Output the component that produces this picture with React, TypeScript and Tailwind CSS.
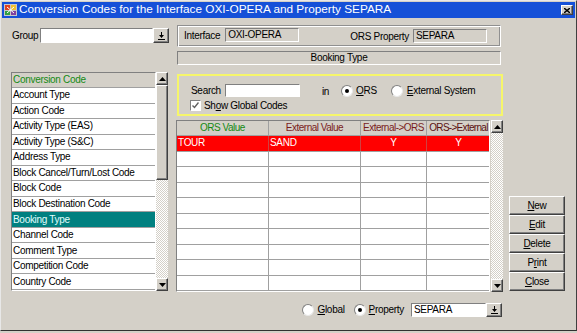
import React from "react";

const raised =
  "border border-t-white border-l-white border-b-[#404040] border-r-[#404040] shadow-[inset_-1px_-1px_0_#808080] bg-[#d4d0c8]";
const sunken =
  "border border-t-[#808080] border-l-[#808080] border-b-white border-r-white";
const track =
  "bg-[repeating-conic-gradient(#ffffff_0_25%,#d4d0c8_0_50%)] bg-[length:2px_2px]";

function DropBtn() {
  return (
    <div className={`${raised} w-[16px] h-full flex items-center justify-center`}>
      <svg width="7" height="8" viewBox="0 0 7 8">
        <path d="M3 0h1v3h2l-2.5 3L1 3h2z" fill="#000" />
        <rect x="0" y="7" width="7" height="1" fill="#000" />
      </svg>
    </div>
  );
}

function ScrollBtn({ up }: { up?: boolean }) {
  return (
    <div className={`${raised} w-[12px] h-[13px] flex items-center justify-center shrink-0`}>
      <svg width="7" height="4" viewBox="0 0 7 4">
        <path d={up ? "M3.5 0L7 4H0z" : "M0 0h7L3.5 4z"} fill="#000" />
      </svg>
    </div>
  );
}

function Radio({ checked }: { checked?: boolean }) {
  return (
    <span className="w-[12px] h-[12px] rounded-full bg-white border border-t-[#808080] border-l-[#808080] border-b-[#e8e8e8] border-r-[#e8e8e8] flex items-center justify-center shrink-0">
      {checked && <span className="w-[4px] h-[4px] rounded-full bg-black" />}
    </span>
  );
}

const listItems = [
  "Account Type",
  "Action Code",
  "Activity Type (EAS)",
  "Activity Type (S&C)",
  "Address Type",
  "Block Cancel/Turn/Lost Code",
  "Block Code",
  "Block Destination Code",
  "Booking Type",
  "Channel Code",
  "Comment Type",
  "Competition Code",
  "Country Code",
];

const buttons: [string, string, string][] = [
  ["", "N", "ew"],
  ["", "E", "dit"],
  ["", "D", "elete"],
  ["P", "r", "int"],
  ["", "C", "lose"],
];

export default function App() {
  return (
    <div className="w-[577px] h-[333px] bg-[#d4d0c8] overflow-hidden font-['Liberation_Sans',Arial,sans-serif] text-[10px] tracking-[-0.3px] text-black leading-none">
      <div className="h-[331px] border border-t-[#e8e8e8] border-l-[#e8e8e8] border-b-[#303030] border-r-[#404040] flex flex-col">
        {/* title bar */}
        <div className="mx-[1px] mt-[1px] h-[16px] bg-[#1550d8] flex items-center pl-[2px] pr-[2px]">
          <svg width="13" height="12" viewBox="0 0 13 12" className="shrink-0">
            <rect x="0" y="0" width="13" height="12" fill="#c8c8c8" />
            <rect x="1" y="1" width="5" height="5" fill="#e04020" />
            <rect x="7" y="1" width="5" height="5" fill="#f0c030" />
            <rect x="1" y="7" width="5" height="4" fill="#30a040" />
            <rect x="7" y="7" width="5" height="4" fill="#8040a0" />
            <path d="M3 3l7 6M10 3L3 9" stroke="#fff" strokeWidth="1" />
          </svg>
          <span className="ml-[2px] text-white text-[11.8px] tracking-normal whitespace-nowrap">
            Conversion Codes for the Interface OXI-OPERA and Property SEPARA
          </span>
          <div className={`${raised} ml-auto w-[12px] h-[10px] flex items-center justify-center`}>
            <svg width="6" height="5" viewBox="0 0 6 5">
              <path d="M0 0l6 5M6 0L0 5" stroke="#000" strokeWidth="1.4" />
            </svg>
          </div>
        </div>

        {/* body */}
        <div className="flex pt-[7px]">
          {/* left column */}
          <div className="ml-[10px] w-[158px] flex flex-col">
            <div className="mt-[3px] h-[15px] flex items-center">
              <span className="w-[29px] pl-[1px]">Group</span>
              <div className={`${sunken} bg-white w-[113px] h-full`} />
              <DropBtn />
            </div>
            <div className="mt-[29px] flex h-[219px]">
              <div className={`${sunken} w-[145px] h-full bg-white flex flex-col overflow-hidden`}>
                <div className="h-[15px] shrink-0 bg-[#d4d0c8] text-[#138a13] border-b border-[#a0a0a0] flex items-center pl-[1px]">
                  Conversion Code
                </div>
                {listItems.map((t) => (
                  <div
                    key={t}
                    className={`flex-1 flex items-center pl-[1px] border-b border-[#a0a0a0] whitespace-nowrap ${
                      t === "Booking Type" ? "bg-[#008080] text-[#e0ffff]" : ""
                    }`}
                  >
                    {t}
                  </div>
                ))}
              </div>
              <div className="w-[12px] h-full flex flex-col">
                <ScrollBtn up />
                <div className={`${raised} h-[95px]`} />
                <div className={`flex-1 ${track}`} />
                <ScrollBtn />
              </div>
            </div>
          </div>

          {/* middle column */}
          <div className="ml-[8px] w-[326px] flex flex-col">
            <div className="w-[324px] h-[22px] border border-t-[#909090] border-l-[#909090] border-b-white border-r-white shadow-[inset_1px_1px_0_#fff,inset_-1px_-1px_0_#909090] flex items-center">
              <span className="ml-[6px]">Interface</span>
              <div className={`${sunken} ml-[5px] w-[74px] h-[14px] flex items-center pl-[2px] mb-[2px]`}>
                OXI-OPERA
              </div>
              <span className="ml-auto mr-[4px] mt-[2px]">ORS Property</span>
              <div className={`${sunken} mr-[13px] w-[74px] h-[14px] flex items-center pl-[2px]`}>
                SEPARA
              </div>
            </div>
            <div className={`${sunken} mt-[4px] w-[324px] h-[14px] flex items-center justify-center`}>
              Booking Type
            </div>

            <div className="mt-[9px] w-[326px] h-[42px] border-2 border-[#f6f66a] flex flex-col">
              <div className="flex items-center mt-[8px] h-[13px]">
                <span className="ml-[12px]">Search</span>
                <div className={`${sunken} bg-white ml-[4px] w-[75px] h-[13px]`} />
                <span className="ml-[22px] mt-[3px]">in</span>
                <span className="ml-[12px]">
                  <Radio checked />
                </span>
                <span className="ml-[3px]">
                  <u className="underline-offset-1">O</u>RS
                </span>
                <span className="ml-[14px]">
                  <Radio />
                </span>
                <span className="ml-[4px]">
                  <u className="underline-offset-1">E</u>xternal System
                </span>
              </div>
              <div className="flex items-center mt-[3px] ml-[11px]">
                <span className={`${sunken} bg-white w-[11px] h-[11px] flex items-center justify-center`}>
                  <svg width="7" height="7" viewBox="0 0 7 7">
                    <path d="M0.5 3.5l2 2 4-5" stroke="#606060" strokeWidth="1.4" fill="none" />
                  </svg>
                </span>
                <span className="ml-[3px]">
                  Sh<u className="underline-offset-1">o</u>w Global Codes
                </span>
              </div>
            </div>

            <div className="mt-[4px] -ml-[1px] flex h-[172px]">
              <div className={`${sunken} w-[315px] h-full bg-white flex flex-col overflow-hidden`}>
                <div className="grid grid-cols-[92px_92px_66px_63px] h-[15px] shrink-0 bg-[#d4d0c8] border-b border-[#a0a0a0] tracking-[-0.5px]">
                  <div className="flex items-center justify-center border-r border-[#a0a0a0] text-[#138a13]">
                    ORS Value
                  </div>
                  <div className="flex items-center justify-center border-r border-[#a0a0a0] text-[#7a1c1c]">
                    External Value
                  </div>
                  <div className="flex items-center justify-center border-r border-[#a0a0a0] text-[#7a1c1c] whitespace-nowrap">
                    External-&gt;ORS
                  </div>
                  <div className="flex items-center justify-center text-[#5a1010] whitespace-nowrap tracking-[-0.7px]">
                    ORS-&gt;External
                  </div>
                </div>
                {Array.from({ length: 10 }).map((_, i) => (
                  <div
                    key={i}
                    className={`grid grid-cols-[92px_92px_66px_63px] flex-1 border-b border-[#a0a0a0] ${
                      i === 0 ? "bg-[#ff0000] text-white" : ""
                    }`}
                  >
                    <div className={`flex items-center pl-[1px] border-r ${i === 0 ? "border-[#d04040]" : "border-[#a0a0a0]"}`}>
                      {i === 0 ? "TOUR" : ""}
                    </div>
                    <div className={`flex items-center pl-[1px] border-r ${i === 0 ? "border-[#d04040]" : "border-[#a0a0a0]"}`}>
                      {i === 0 ? "SAND" : ""}
                    </div>
                    <div className={`flex items-center justify-center border-r ${i === 0 ? "border-[#d04040]" : "border-[#a0a0a0]"}`}>
                      {i === 0 ? "Y" : ""}
                    </div>
                    <div className="flex items-center justify-center">{i === 0 ? "Y" : ""}</div>
                  </div>
                ))}
              </div>
              <div className="ml-[1px] w-[12px] h-full flex flex-col">
                <ScrollBtn up />
                <div className={`flex-1 ${track}`} />
                <ScrollBtn />
              </div>
            </div>

            <div className="mt-[11px] h-[14px] flex items-center justify-end">
              <Radio />
              <span className="ml-[3px]">
                <u className="underline-offset-1">G</u>lobal
              </span>
              <span className="ml-[9px]">
                <Radio checked />
              </span>
              <span className="ml-[3px]">
                <u className="underline-offset-1">P</u>roperty
              </span>
              <div className="ml-[7px] flex h-[14px] mr-[1px]">
                <div className={`${sunken} bg-white w-[75px] h-full flex items-center pl-[2px]`}>SEPARA</div>
                <DropBtn />
              </div>
            </div>
          </div>

          {/* right column */}
          <div className="ml-[6px] w-[56px] mt-[171px] flex flex-col">
            {buttons.map(([a, u, b]) => (
              <div key={u + b} className={`${raised} h-[19px] flex items-center justify-center`}>
                {a}
                <u className="underline-offset-1">{u}</u>
                {b}
              </div>
            ))}
          </div>
        </div>
      </div>
    </div>
  );
}
